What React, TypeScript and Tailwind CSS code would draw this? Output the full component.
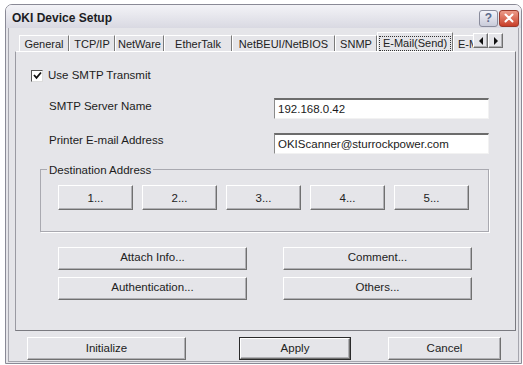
import React from "react";

function Btn({ children, className = "" }: { children?: React.ReactNode; className?: string }) {
  return (
    <div
      className={
        "flex items-center justify-center border border-t-white border-l-white border-r-[#707070] border-b-[#707070] shadow-[inset_-1px_-1px_0_#b0b0b4] bg-[#e5e5e9] text-[11.5px] text-[#222] " +
        className
      }
    >
      {children}
    </div>
  );
}

function Input({ value }: { value: string }) {
  return (
    <div className="w-[215px] h-[21px] bg-white border-t-2 border-t-[#6c6c6c] border-l border-l-[#8a8a8a] border-r border-r-[#f2f2f2] border-b border-b-[#f2f2f2] flex items-center pl-[3px] text-[11.5px] text-[#1a1a1a]">
      {value}
    </div>
  );
}

const tabs: [string, number][] = [
  ["General", 50],
  ["TCP/IP", 46],
  ["NetWare", 49],
  ["EtherTalk", 68],
  ["NetBEUI/NetBIOS", 103],
  ["SNMP", 42],
];

export default function App() {
  return (
    <div className="w-[523px] h-[365px] bg-white font-['Liberation_Sans',Arial,sans-serif] overflow-hidden">
      <div className="ml-[5px] mt-[4px] w-[517px] h-[360px] border border-[#8a8a96] rounded-t-[7px] overflow-hidden flex flex-col">
        {/* title bar */}
        <div className="h-[23px] shrink-0 bg-gradient-to-b from-[#f3f3f7] to-[#d9d9e2] flex items-center pl-[6px] pr-[2px]">
          <div className="text-[12px] font-bold text-[#1c1c24] flex-1 pt-[2px]">OKI Device Setup</div>
          <div className="flex gap-[1px] mt-[3px]">
            <div className="w-[19px] h-[17px] rounded-[3px] border border-[#8a8c9c] bg-gradient-to-b from-[#f4f4fa] to-[#c9cbd9] flex items-center justify-center text-[12px] font-bold text-[#5d6b8c]">
              ?
            </div>
            <div className="w-[20px] h-[17px] rounded-[3px] border border-[#9a3a2c] bg-gradient-to-b from-[#eb9a88] to-[#c83c27] flex items-center justify-center">
              <svg width="10" height="10" viewBox="0 0 10 10">
                <path d="M1.5 1.5 L8.5 8.5 M8.5 1.5 L1.5 8.5" stroke="white" strokeWidth="2" strokeLinecap="round" />
              </svg>
            </div>
          </div>
        </div>
        {/* body */}
        <div className="flex-1 bg-[#e5e5e9] px-[2px] pb-[1px] flex flex-col">
          <div className="flex-1 border-l border-r border-b border-[#a6a6ae] flex flex-col">
            {/* tab strip */}
            <div className="mt-[4px] h-[19px] flex pl-[10px] relative z-10">
              <div className="w-[454px] flex overflow-hidden items-end">
                {tabs.map(([t, w]) => (
                  <div
                    key={t}
                    style={{ width: w }}
                    className="h-[17px] shrink-0 whitespace-nowrap border-t border-l border-t-white border-l-white border-r border-r-[#7a7a7a] flex items-center justify-center text-[11px] text-[#222] mb-[-1px]"
                  >
                    {t}
                  </div>
                ))}
                <div className="w-[76px] h-[21px] shrink-0 border-t border-l border-t-white border-l-white border-r border-r-[#7a7a7a] bg-[#e5e5e9] flex items-center justify-center mb-[-2px]">
                  <div className="border border-dotted border-[#333] px-[3px] h-[15px] flex items-center whitespace-nowrap text-[11px] text-[#222]">
                    E-Mail(Send)
                  </div>
                </div>
                <div className="w-[40px] h-[17px] shrink-0 overflow-hidden whitespace-nowrap border-t border-l border-t-white border-l-white flex items-center pl-[4px] text-[11px] text-[#222] mb-[-1px]">
                  E-Mail(Receive)
                </div>
              </div>
              <div className="flex mt-[1px]">
                <Btn className="w-[15px] h-[15px]">
                  <svg width="6" height="8" viewBox="0 0 6 8">
                    <path d="M5 0 L1 4 L5 8 Z" fill="#111" />
                  </svg>
                </Btn>
                <Btn className="w-[15px] h-[15px]">
                  <svg width="6" height="8" viewBox="0 0 6 8">
                    <path d="M1 0 L5 4 L1 8 Z" fill="#111" />
                  </svg>
                </Btn>
              </div>
            </div>
            {/* panel */}
            <div className="ml-[6px] w-[501px] h-[280px] border border-t-white border-l-[#9a9aa2] border-r-[#7a7a80] border-b-[#7a7a80] flex flex-col text-[11.5px] text-[#1c1c1c]">
              <div className="mt-[17px] ml-[15px] flex items-center gap-[5px] h-[13px]">
                <div className="w-[12px] h-[12px] bg-white border-t border-l border-t-[#555] border-l-[#555] border-r border-b border-r-[#ddd] border-b-[#ddd] flex items-center justify-center">
                  <svg width="9" height="9" viewBox="0 0 9 9">
                    <path d="M1 4 L3.5 6.8 L8 1.5" stroke="#111" strokeWidth="1.8" fill="none" />
                  </svg>
                </div>
                <span>Use SMTP Transmit</span>
              </div>
              <div className="mt-[16px] ml-[33px] flex items-center">
                <span className="w-[225px] mb-[4px]">SMTP Server Name</span>
                <Input value="192.168.0.42" />
              </div>
              <div className="mt-[13px] ml-[33px] flex items-center">
                <span className="w-[225px] mb-[6px]">Printer E-mail Address</span>
                <Input value="OKIScanner@sturrockpower.com" />
              </div>
              <div className="mt-[13px] ml-[24px] w-[449px] h-[63px] border border-[#a9a9b0] shadow-[1px_1px_0_#ffffff] relative pt-[14px] pl-[17px]">
                <span className="absolute left-[6px] top-[-8px] px-[2px] bg-[#e5e5e9]">Destination Address</span>
                <div className="flex gap-[9px] mt-[1px]">
                  {["1...", "2...", "3...", "4...", "5..."].map((b) => (
                    <Btn key={b} className="w-[75px] h-[25px] pt-[3px]">
                      {b}
                    </Btn>
                  ))}
                </div>
              </div>
              <div className="mt-[15px] ml-[42px] flex gap-[36px]">
                <Btn className="w-[189px] h-[23px]">Attach Info...</Btn>
                <Btn className="w-[189px] h-[23px]">Comment...</Btn>
              </div>
              <div className="mt-[7px] ml-[42px] flex gap-[36px]">
                <Btn className="w-[189px] h-[23px]">Authentication...</Btn>
                <Btn className="w-[189px] h-[23px]">Others...</Btn>
              </div>
            </div>
            {/* bottom buttons */}
            <div className="mt-[6px] ml-[18px] flex">
              <Btn className="w-[159px] h-[23px]">Initialize</Btn>
              <div className="ml-[53px] w-[112px] h-[23px] border border-[#2a2a2a] flex">
                <Btn className="flex-1">Apply</Btn>
              </div>
              <Btn className="ml-[37px] w-[113px] h-[23px]">Cancel</Btn>
            </div>
          </div>
        </div>
      </div>
    </div>
  );
}
